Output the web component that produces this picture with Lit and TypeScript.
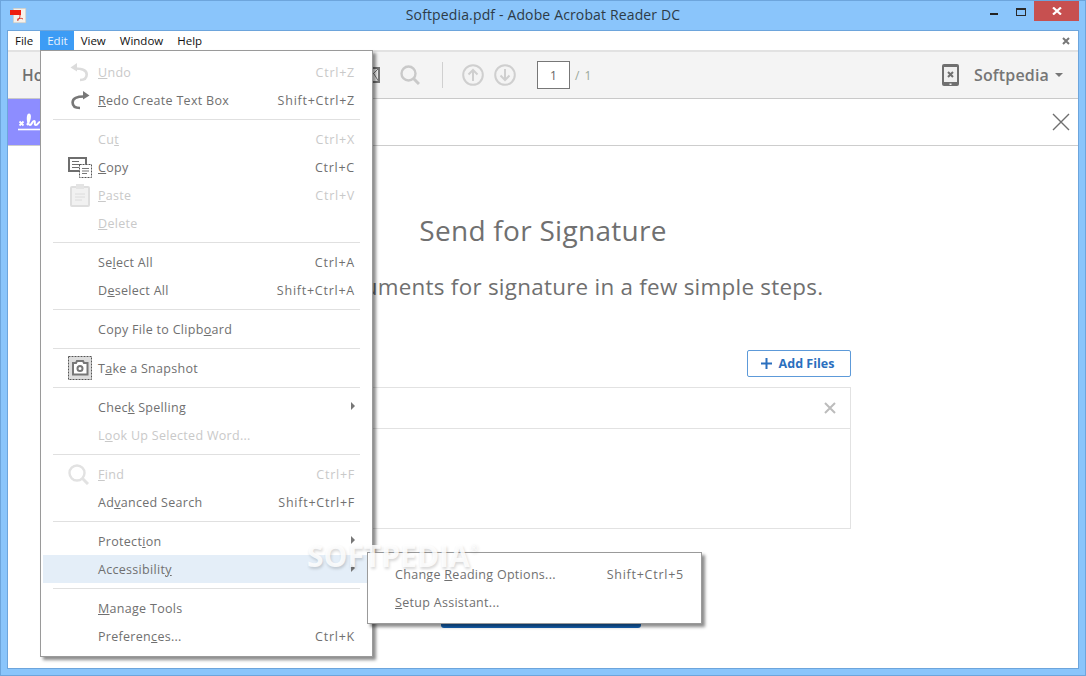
import { LitElement, html, css, svg, nothing } from "lit";
import { customElement } from "lit/decorators.js";

type Row = {
  sep?: boolean;
  text?: string;
  key?: number;
  sc?: string;
  off?: boolean;
  arrow?: boolean;
  hover?: boolean;
  icon?: string;
};

const MENU: Row[] = [
  { text: "Undo", key: 0, sc: "Ctrl+Z", off: true, icon: "undo" },
  { text: "Redo Create Text Box", key: 0, sc: "Shift+Ctrl+Z", icon: "redo" },
  { sep: true },
  { text: "Cut", key: 2, sc: "Ctrl+X", off: true },
  { text: "Copy", key: 0, sc: "Ctrl+C", icon: "copy" },
  { text: "Paste", key: 0, sc: "Ctrl+V", off: true, icon: "paste" },
  { text: "Delete", key: 0, off: true },
  { sep: true },
  { text: "Select All", key: 2, sc: "Ctrl+A" },
  { text: "Deselect All", key: 1, sc: "Shift+Ctrl+A" },
  { sep: true },
  { text: "Copy File to Clipboard", key: 18 },
  { sep: true },
  { text: "Take a Snapshot", key: 1, icon: "snap" },
  { sep: true },
  { text: "Check Spelling", key: 4, arrow: true },
  { text: "Look Up Selected Word...", key: 1, off: true },
  { sep: true },
  { text: "Find", key: 0, sc: "Ctrl+F", off: true, icon: "find" },
  { text: "Advanced Search", key: 2, sc: "Shift+Ctrl+F" },
  { sep: true },
  { text: "Protection", key: 7, arrow: true },
  { text: "Accessibility", key: 12, arrow: true, hover: true },
  { sep: true },
  { text: "Manage Tools", key: 0 },
  { text: "Preferences...", key: 8, sc: "Ctrl+K" },
];

const SUB: Row[] = [
  { text: "Change Reading Options...", key: 7, sc: "Shift+Ctrl+5" },
  { text: "Setup Assistant...", key: 0 },
];

const ICONS: Record<string, unknown> = {
  undo: svg`<svg width="22" height="20" viewBox="-2 0 22 20"><path d="M5 6.5C12 6.5 16.700 8 16.700 12.500C16.700 16.500 14 18 10 18" fill="none" stroke="#dcdcdc" stroke-width="2.600"/><path d="M7 1 0.5 5.500 7 9.500Z" fill="#dcdcdc"/></svg>`,
  redo: svg`<svg width="22" height="20" viewBox="-2 0 22 20"><path d="M14 6.5C7 6.5 2.600 8 2.600 12.500C2.600 16.500 6 18 10 18" fill="none" stroke="#777" stroke-width="2.600"/><path d="M13 1 19.500 5.500 13 9.500Z" fill="#777"/></svg>`,
  copy: svg`<svg width="24" height="21" viewBox="0 0 24 21"><path d="M1 1H18V14H1Z" fill="#fff" stroke="#6e6e6e" stroke-width="2"/><path d="M4 4.500H11M4 7.500H14M4 10.500H11" stroke="#6e6e6e"/><rect x="11.500" y="7.500" width="12" height="13" fill="#fff" stroke="#555" stroke-dasharray="2 1"/><path d="M14 11.500H21M14 14H21M14 16.500H19" stroke="#777"/></svg>`,
  paste: svg`<svg width="22" height="24" viewBox="-2 0 22 24"><rect x="1" y="4" width="18" height="19" rx="1" fill="#f1f1f1" stroke="#dedede" stroke-width="2"/><rect x="6" y="1" width="8" height="5" fill="#e4e4e4"/><path d="M5 11H15M5 14H15M5 17H12" stroke="#dcdcdc"/></svg>`,
  snap: svg`<svg width="24" height="24" viewBox="0 0 24 24"><rect x=".5" y=".5" width="23" height="23" fill="#dedede" stroke="#555" stroke-dasharray="2 1"/><path d="M5 7H8L9 5H15L16 7H19.500V18.500H5Z" fill="#fff" stroke="#777" stroke-width="2"/><circle cx="12" cy="12.500" r="2.500" fill="#fff" stroke="#777" stroke-width="2"/></svg>`,
  find: svg`<svg width="21" height="21" viewBox="0 0 21 21"><circle cx="9" cy="9" r="7.500" fill="none" stroke="#e2e2e2" stroke-width="2.400"/><path d="M14.500 14.500 20 20" stroke="#e2e2e2" stroke-width="3"/></svg>`,
};

const label = (r: Row) => {
  const t = r.text!;
  const k = r.key ?? -1;
  if (k < 0) return t;
  return html`${t.slice(0, k)}<u>${t[k]}</u>${t.slice(k + 1)}`;
};

const rowTpl = (r: Row) =>
  r.sep
    ? html`<div class="sep"></div>`
    : html`<div class="row ${r.off ? "off" : ""} ${r.hover ? "hover" : ""}">
        <span class="ic">${r.icon ? ICONS[r.icon] : nothing}</span>
        <span class="lbl">${label(r)}</span>
        ${r.sc ? html`<span class="sc">${r.sc}</span>` : nothing}
        ${r.arrow ? html`<span class="arr"></span>` : nothing}
      </div>`;

@customElement("app-root")
export class AppRoot extends LitElement {
  static styles = css`
    :host { display: block; width: 1086px; height: 676px; position: relative; overflow: hidden;
      font-family: "Open Sans", "Noto Sans", sans-serif; }
    .win { width: 1086px; height: 676px; box-sizing: border-box; background: #8ac5fb; border: 1px solid #6da5dc;
      display: flex; flex-direction: column; padding: 0 6px 6px; }
    .title { height: 29px; flex: none; display: flex; align-items: flex-start; position: relative; }
    .appicon { position: absolute; left: 3px; top: 6px; }
    .ttext { position: absolute; left: 0; right: 0; top: 4px; text-align: center; font-size: 14px; line-height: 20px; color: #2d3b47; letter-spacing: .01em; }
    .btns { margin-left: auto; display: flex; align-items: flex-start; position: relative; }
    .min { width: 8px; height: 2px; background: #222; margin-top: 12px; margin-right: 18px; }
    .max { box-sizing: border-box; width: 10px; height: 8px; border: 1px solid #2a2a2a; border-top-width: 2px; margin-top: 7px; margin-right: 8px; }
    .close { width: 45px; height: 20px; background: #c75050; display: flex; align-items: center; justify-content: center; }
    .client { flex: 1; background: #fff; border: 1px solid #6da5dc; display: flex; flex-direction: column; min-height: 0; }
    .mbar { height: 19px; flex: none; display: flex; align-items: stretch; font-size: 11.500px; color: #111; position: relative; border-bottom: 2px solid #e2e2e2; }
    .mi { padding: 1px 7px 0; display: flex; align-items: center; line-height: 18px; height: 18px; }
    .mi.on { background: #3d9cf5; color: #e8f3fd; padding-right: 6px; }
    .mx { position: absolute; right: 8px; top: 6px; }
    .tool { height: 46px; flex: none; background: #f4f4f4; border-bottom: 1px solid #c9c9c9; display: flex; align-items: center; color: #777; }
    .home { font-size: 15.500px; font-weight: 600; margin-left: 14px; width: 342px; color: #707070; }
    .mail { margin-right: 20px; display: block; }
    .tsep { width: 1px; height: 26px; background: #d0d0d0; margin: 0 19px 0 12px; }
    .circle { margin-right: 10px; display: block; }
    .page { box-sizing: border-box; width: 33px; height: 28px; background: #fff; border: 1px solid #777; margin-left: 11px; font-size: 12px; color: #666; display: flex; align-items: center; justify-content: center; }
    .of { font-size: 12px; color: #9aa79a; margin-left: 5px; letter-spacing: .08em; }
    .acct { margin-left: auto; display: flex; align-items: center; margin-right: 15px; }
    .acct b { font-size: 16px; font-weight: 600; color: #767676; margin-left: 15px; letter-spacing: .01em; }
    .caret { width: 0; height: 0; border: 4px solid transparent; border-top: 4px solid #767676; border-bottom: 0; margin-left: 6px; }
    .tabs { height: 46px; flex: none; border-bottom: 1px solid #cdcdcd; display: flex; align-items: center; }
    .purple { width: 60px; height: 46px; background: #8d8dff; display: flex; align-items: center; padding-left: 10px; box-sizing: border-box; }
    .xbig { margin-left: auto; margin-right: 8px; display: block; }
    .main { flex: 1; display: flex; flex-direction: column; align-items: center; min-height: 0; width: 616px; align-self: center; }
    h1 { margin: 65px 0 0; font-size: 28px; font-weight: 400; line-height: 38px; color: #707070; letter-spacing: .01em; }
    .subt { margin: 21px 0 0 14px; font-size: 22.400px; line-height: 34px; color: #707070; white-space: nowrap; letter-spacing: .012em; }
    .addrow { align-self: stretch; display: flex; justify-content: flex-end; margin-top: 46px; }
    .add { box-sizing: border-box; width: 104px; height: 27px; border: 1px solid #5d9ad9; border-radius: 2px; color: #2a6fbe; font-size: 12.500px; font-weight: 700; display: flex; align-items: center; justify-content: center; gap: 7px; background: #fff; padding-right: 3px; }
    .box { align-self: stretch; box-sizing: border-box; height: 142px; margin-top: 10px; border: 1px solid #e2e2e2; }
    .bhead { height: 40px; border-bottom: 1px solid #e2e2e2; display: flex; align-items: center; justify-content: flex-end; padding-right: 14px; }
    .send { margin-top: 63px; margin-right: 4px; width: 200px; height: 36px; flex: none; background: #1769bd; border-radius: 3px; }
    .menu { position: absolute; box-sizing: border-box; background: #fff; border: 1px solid #9a9a9a; padding: 7px 0; box-shadow: 3px 3px 3px rgba(0,0,0,.45); font-size: 12.500px; color: #707070; z-index: 2; }
    .m1 { left: 40px; top: 50px; width: 333px; height: 607px; }
    .m2 { left: 367px; top: 552px; width: 335px; height: 72px; z-index: 3; }
    .row { height: 28px; margin: 0 2px; display: flex; align-items: center; position: relative; padding: 0 16px 0 25px; white-space: nowrap; line-height: 20px; letter-spacing: .3px; }
    .lbl, .sc { padding-top: 2px; }
    .sc { margin-left: auto; letter-spacing: .75px; margin-right: -1px; }
    .row.hover { background: #e4eef8; }
    .row.off { color: #c9c9c9; }
    .ic { width: 30px; flex: none; height: 28px; display: flex; align-items: center; }
    .arr { margin-left: auto; width: 0; height: 0; margin-right: -1px; border: 4px solid transparent; border-left: 4px solid #777; border-right: 0; margin-top: -2px; }
    .m2 .row { padding-left: 25px; padding-right: 18px; margin: 0; }
    .m2 .ic { width: 2px; }
    .sep { height: 1px; background: #e0e0e0; margin: 5px 12px; }
    .mark { position: absolute; left: 307px; top: 536px; font-size: 30px; font-weight: 700; line-height: 40px; color: rgba(255,255,255,.85); text-shadow: 1px 2px 3px rgba(0,0,0,.16); z-index: 4; pointer-events: none; display: flex; align-items: flex-start; }
    .mark span { font-size: 10px; line-height: 24px; font-weight: 400; }
  `;

  render() {
    return html`
      <div class="win">
        <div class="title">
          <svg class="appicon" width="17" height="17" viewBox="0 0 17 17"><rect x="3.300" y="1.300" width="12.500" height="14.500" fill="#f6f1ea" stroke="#cfc8bd" stroke-width=".6"/><rect x="0" y="3" width="11" height="5" fill="#ee1c0e"/><path d="M7.500 14C9.500 11.500 10 10 10 8M7 12.500C9 11 11.500 11 13 12" stroke="#d8342a" fill="none"/></svg>
          <div class="ttext">Softpedia.pdf - Adobe Acrobat Reader DC</div>
          <div class="btns">
            <div class="min"></div>
            <div class="max"></div>
            <div class="close"><svg width="10" height="8" viewBox="0 0 10 8"><path d="M1 .5 9 7.500M9 .5 1 7.500" stroke="#fff" stroke-width="2.200"/></svg></div>
          </div>
        </div>
        <div class="client">
          <div class="mbar">
            <div class="mi">File</div><div class="mi on">Edit</div><div class="mi">View</div><div class="mi">Window</div><div class="mi">Help</div>
            <svg class="mx" width="8" height="8" viewBox="0 0 8 8"><path d="M1 1 7 7M7 1 1 7" stroke="#777" stroke-width="2"/></svg>
          </div>
          <div class="tool">
            <div class="home">Home</div>
            <svg class="mail" width="16" height="16" viewBox="0 0 16 16"><rect x="1" y="1" width="14" height="14" fill="none" stroke="#777" stroke-width="2"/><path d="M1 1 8 8 15 1M1 15 6 7M15 15 10 7" fill="none" stroke="#777"/></svg>
            <svg width="20" height="20" viewBox="0 0 20 20" class="circle"><circle cx="8.500" cy="8.500" r="7" fill="none" stroke="#c9c9c9" stroke-width="2.400"/><path d="M13.500 13.500 19 19" stroke="#c9c9c9" stroke-width="3"/></svg>
            <div class="tsep"></div>
            <svg class="circle" width="22" height="22" viewBox="0 0 22 22"><circle cx="11" cy="11" r="9.800" fill="none" stroke="#cfcfcf" stroke-width="2"/><path d="M11 17V6M6.500 10.500 11 6 15.500 10.500" fill="none" stroke="#cfcfcf" stroke-width="2"/></svg>
            <svg class="circle" width="22" height="22" viewBox="0 0 22 22"><circle cx="11" cy="11" r="9.800" fill="none" stroke="#cfcfcf" stroke-width="2"/><path d="M11 5V16M6.500 11.500 11 16 15.500 11.500" fill="none" stroke="#cfcfcf" stroke-width="2"/></svg>
            <div class="page">1</div>
            <div class="of">/ 1</div>
            <div class="acct">
              <svg width="17" height="22" viewBox="0 0 17 22"><rect x="0" y="0" width="17" height="22" rx="2" fill="#707070"/><rect x="2" y="3" width="13" height="15" fill="#f0f0f0"/><path d="M6 8 11 13M11 8 6 13" stroke="#707070" stroke-width="2"/><rect x="7.500" y="19.500" width="2" height="1.500" fill="#eee"/></svg>
              <b>Softpedia</b><span class="caret"></span>
            </div>
          </div>
          <div class="tabs">
            <div class="purple">
              <svg width="24" height="24" viewBox="0 0 24 24"><path d="M1.500 11.500 5.500 15.500M5.500 11.500 1.500 15.500" fill="none" stroke="#fff" stroke-width="1.800"/><path d="M9 15C11.500 12 13 5 11 4.500C9 4.500 9.500 15 12 15C14 15 14 11 16 11C18 11 15.500 15 18 15C20 15 20 12 22 12" fill="none" stroke="#fff" stroke-width="2"/><path d="M0 19.500H24" stroke="#fff" stroke-width="1.600"/></svg>
            </div>
            <svg class="xbig" width="18" height="18" viewBox="0 0 18 18"><path d="M1 1 17 17M17 1 1 17" stroke="#6f6f6f" stroke-width="1.400"/></svg>
          </div>
          <div class="main">
            <h1>Send for Signature</h1>
            <div class="subt">Add documents for signature in a few simple steps.</div>
            <div class="addrow"><div class="add"><svg width="11" height="11" viewBox="0 0 11 11"><path d="M5.500 0V11M0 5.500H11" stroke="#2a6fbe" stroke-width="2"/></svg>Add Files</div></div>
            <div class="box"><div class="bhead"><svg width="12" height="12" viewBox="0 0 12 12"><path d="M1 1 11 11M11 1 1 11" stroke="#bcbcbc" stroke-width="2"/></svg></div></div>
            <div class="send"></div>
          </div>
        </div>
      </div>
      <div class="menu m1">${MENU.map(rowTpl)}</div>
      <div class="menu m2">${SUB.map(rowTpl)}</div>
      <div class="mark">SOFTPEDIA<span>®</span></div>
    `;
  }
}
